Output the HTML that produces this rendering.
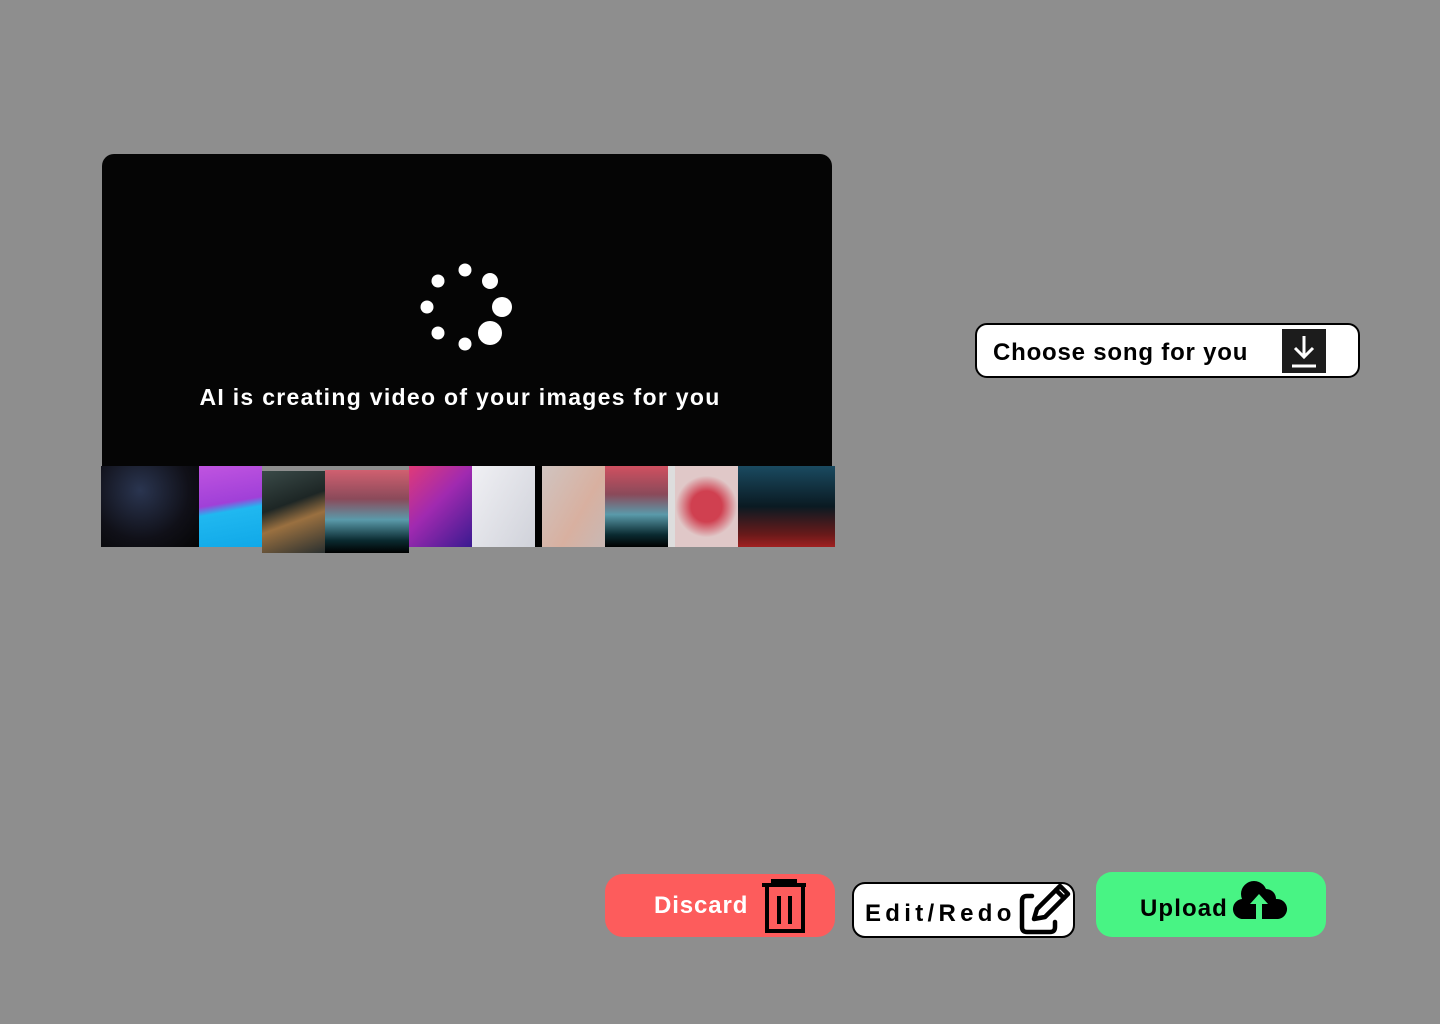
<!DOCTYPE html>
<html><head><style>
body{margin:0;width:1440px;height:1024px;background:#8e8e8e;position:relative;overflow:hidden;font-family:"Liberation Sans",sans-serif;}
.abs{position:absolute}
.t{position:absolute}
</style></head><body>
<div class="abs" style="left:102px;top:154px;width:730px;height:312px;background:#050505;border-radius:12px 12px 0 0"></div>
<svg class="abs" style="left:0;top:0" width="1440" height="1024">
<g fill="#fff">
<circle cx="465" cy="270" r="6.5"/><circle cx="490" cy="281" r="8"/><circle cx="502" cy="307" r="10"/><circle cx="490" cy="333" r="12"/>
<circle cx="465" cy="344" r="6.5"/><circle cx="438" cy="333" r="6.5"/><circle cx="427" cy="307" r="6.5"/><circle cx="438" cy="281" r="6.5"/>
</g>
</svg>
<div class="t" style="left:102px;width:716px;top:384px;text-align:center;color:#fff;font-weight:bold;font-size:23px;letter-spacing:1.3px">AI is creating video of your images for you</div>
<!-- strip -->
<div class="abs" style="left:101px;top:466px;width:98px;height:81px;background:radial-gradient(circle at 40% 30%,#2a3550,#101018 60%,#050505)"></div>
<div class="abs" style="left:199px;top:466px;width:63px;height:81px;background:linear-gradient(170deg,#c054e0 0%,#a040d8 45%,#20b8f0 55%,#10a8e8 100%)"></div>
<div class="abs" style="left:262px;top:471px;width:63px;height:82px;background:linear-gradient(160deg,#3a4a48,#1d2625 40%,#9a7040 60%,#2a3030)"></div>
<div class="abs" style="left:325px;top:470px;width:84px;height:83px;background:linear-gradient(180deg,#d06070 0%,#8a4a5a 35%,#5a9aaa 60%,#0a2a30 85%,#000 100%)"></div>
<div class="abs" style="left:409px;top:466px;width:63px;height:81px;background:linear-gradient(135deg,#e03a78,#a02ab0 45%,#3a1a90 100%)"></div>
<div class="abs" style="left:472px;top:466px;width:63px;height:81px;background:linear-gradient(120deg,#f0f0f4,#d0d2da)"></div>
<div class="abs" style="left:535px;top:466px;width:7px;height:81px;background:#000"></div>
<div class="abs" style="left:542px;top:466px;width:63px;height:81px;background:linear-gradient(120deg,#d0c4c0,#d8b0a0 60%,#c8b8b4)"></div>
<div class="abs" style="left:605px;top:466px;width:63px;height:81px;background:linear-gradient(180deg,#d05060 0%,#8a4a5a 35%,#5a9aaa 60%,#0a2a30 85%,#000 100%)"></div>
<div class="abs" style="left:668px;top:466px;width:7px;height:81px;background:#ddd"></div>
<div class="abs" style="left:675px;top:466px;width:63px;height:81px;background:radial-gradient(circle at 50% 50%,#d04050 30%,#e0c8c8 60%)"></div>
<div class="abs" style="left:738px;top:466px;width:97px;height:81px;background:linear-gradient(180deg,#1a4a60 0%,#0a1a22 50%,#6a1a1a 85%,#a02020 100%)"></div>
<!-- choose song -->
<div class="abs" style="left:975px;top:323px;width:381px;height:51px;background:#fff;border:2px solid #000;border-radius:12px"></div>
<div class="t" style="left:993px;top:339px;font-size:24px;font-weight:bold;color:#000;letter-spacing:0.8px">Choose song for you</div>
<div class="abs" style="left:1282px;top:329px;width:44px;height:44px;background:#1c1c1c"></div>
<svg class="abs" style="left:1282px;top:329px" width="44" height="44"><g stroke="#fff" stroke-width="3" fill="none"><path d="M22 7V28M13 19l9 9 9-9"/><path d="M10 37H34"/></g></svg>
<!-- discard -->
<div class="abs" style="left:605px;top:874px;width:230px;height:63px;background:#fd5c5c;border-radius:18px"></div>
<div class="t" style="left:654px;top:892px;font-size:24px;font-weight:bold;color:#fff;letter-spacing:0.9px">Discard</div>
<svg class="abs" style="left:755px;top:875px" width="60" height="65"><g fill="none" stroke="#000" stroke-width="4"><path d="M7 10H51"/><path d="M18 9V6H40V9"/><path d="M12 12V56H48V12"/><path d="M24 21V49M35 21V49"/></g></svg>
<!-- edit -->
<div class="abs" style="left:852px;top:882px;width:219px;height:52px;background:#fff;border:2px solid #000;border-radius:13px"></div>
<div class="t" style="left:865px;top:900px;font-size:24px;font-weight:bold;color:#000;letter-spacing:4.3px">Edit/Redo</div>
<svg class="abs" style="left:1010px;top:875px" width="70" height="65"><g fill="none" stroke="#000" stroke-width="4.5" stroke-linecap="round" stroke-linejoin="round"><path d="M22 21H17Q12 21 12 26V52Q12 57 17 57H40Q45 57 45 52V47"/><path d="M24 44L27 34L50 11L58 19L35 42Z"/><path d="M46 15L54 23"/></g></svg>
<!-- upload -->
<div class="abs" style="left:1096px;top:872px;width:230px;height:65px;background:#48f484;border-radius:16px"></div>
<div class="t" style="left:1140px;top:895px;font-size:24px;font-weight:bold;color:#000;letter-spacing:1.1px">Upload</div>
<svg class="abs" style="left:1228px;top:875px" width="65" height="50"><path d="M22 44H16A10 10 0 0 1 14 24 13 13 0 0 1 38 14 10 10 0 0 1 48 24 10 10 0 0 1 50 44H40Z" fill="#000"/><path d="M31 19L22 29H28V44H34V29H40Z" fill="#48f484"/></svg>
</body></html>
